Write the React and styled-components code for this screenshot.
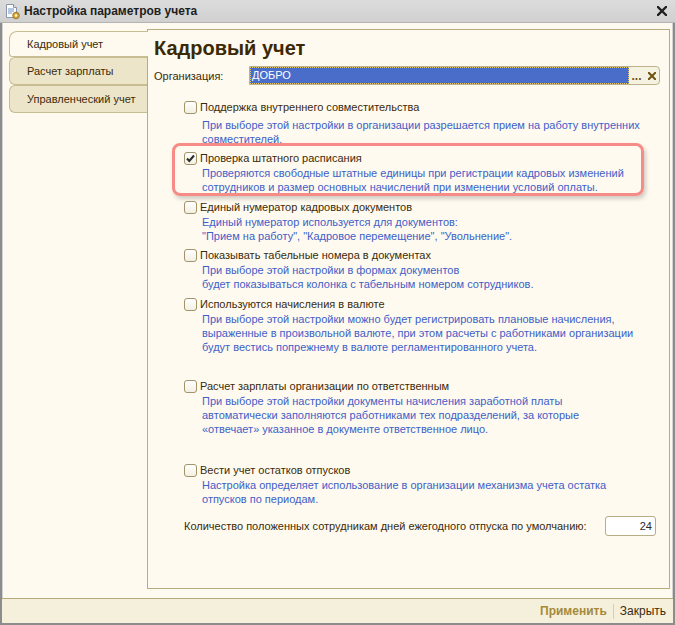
import React from "react";
import styled, { createGlobalStyle } from "styled-components";

const GlobalStyle = createGlobalStyle`
  html, body {
    margin: 0;
    padding: 0;
    background: #ffffff;
  }
  body {
    font-family: "Liberation Sans", Arial, sans-serif;
  }
`;

const settings = [
  {
    label: "Поддержка внутреннего совместительства",
    desc: [
      "При выборе этой настройки в организации разрешается прием на работу внутренних",
      "совместителей.",
    ],
    top: 0,
    descTop: 3,
  },
  {
    label: "Проверка штатного расписания",
    desc: [
      "Проверяются свободные штатные единицы при регистрации кадровых изменений",
      "сотрудников и размер основных начислений при изменении условий оплаты.",
    ],
    top: 4,
    checked: true,
    highlight: true,
  },
  {
    label: "Единый нумератор кадровых документов",
    desc: [
      "Единый нумератор используется для документов:",
      "\"Прием на работу\", \"Кадровое перемещение\", \"Увольнение\".",
    ],
    top: 5,
  },
  {
    label: "Показывать табельные номера в документах",
    desc: [
      "При выборе этой настройки в формах документов",
      "будет показываться колонка с табельным номером сотрудников.",
    ],
    top: 4,
  },
  {
    label: "Используются начисления в валюте",
    desc: [
      "При выборе этой настройки можно будет регистрировать плановые начисления,",
      "выраженные в произвольной валюте, при этом расчеты с работниками организации",
      "будут вестись попрежнему в валюте регламентированного учета.",
    ],
    top: 5,
  },
  {
    label: "Расчет зарплаты организации по ответственным",
    desc: [
      "При выборе этой настройки документы начисления заработной платы",
      "автоматически заполняются работниками тех подразделений, за которые",
      "«отвечает» указанное в документе ответственное лицо.",
    ],
    top: 24,
  },
  {
    label: "Вести учет остатков отпусков",
    desc: [
      "Настройка определяет использование в организации механизма учета остатка",
      "отпусков по периодам.",
    ],
    top: 26,
  },
];

const tabs = ["Кадровый учет", "Расчет зарплаты", "Управленческий учет"];

const App = () => {
  return (
    <>
      <GlobalStyle />
      <Window>
        <TitleBar>
          <DocIcon />
          <Title>Настройка параметров учета</Title>
          <Cross size={10} weight={2.3} color="#1f1f1f" />
        </TitleBar>
        <Body>
          <Tabs>
            {tabs.map((t, i) => (
              <Tab key={t} active={i === 0}>
                {t}
              </Tab>
            ))}
          </Tabs>
          <Panel>
            <Heading>Кадровый учет</Heading>
            <FieldRow>
              <FieldLabel>Организация:</FieldLabel>
              <Field>
                <FieldValue>ДОБРО</FieldValue>
                <FieldButton>...</FieldButton>
                <FieldButton>
                  <Cross size={8} weight={2} color="#6d5312" />
                </FieldButton>
              </Field>
            </FieldRow>
            <Items>
              {settings.map((s) => (
                <Item key={s.label} top={s.top} highlight={s.highlight}>
                  <CheckRow>
                    <CheckBox checked={s.checked} />
                    <Label>{s.label}</Label>
                  </CheckRow>
                  <Desc top={s.descTop || 0}>
                    {s.desc.map((line) => (
                      <div key={line}>{line}</div>
                    ))}
                  </Desc>
                </Item>
              ))}
              <CountRow>
                <Label>
                  Количество положенных сотрудникам дней ежегодного отпуска по
                  умолчанию:
                </Label>
                <NumberInput>24</NumberInput>
              </CountRow>
            </Items>
          </Panel>
        </Body>
        <Footer>
          <FooterButton primary>Применить</FooterButton>
          <Separator />
          <FooterButton>Закрыть</FooterButton>
        </Footer>
      </Window>
    </>
  );
};

const Cross = ({ size, weight, color }) => (
  <svg width={size} height={size} viewBox="0 0 10 10">
    <path
      d="M1 1L9 9M9 1L1 9"
      stroke={color}
      strokeWidth={weight * (10 / size)}
      strokeLinecap="square"
    />
  </svg>
);

const DocIcon = () => (
  <svg width="17" height="17" viewBox="0 0 17 17">
    <path d="M2.5 1.5h7l3 3v10h-10z" fill="#fff" stroke="#8a97aa" />
    <path d="M9.5 1.5v3h3" fill="#dfe6ef" stroke="#8a97aa" />
    <path d="M4 6h6M4 8h6M4 10h4" stroke="#6f8fc8" strokeWidth="1" />
    <circle cx="12" cy="12.5" r="3.3" fill="#d8a634" stroke="#8a6a1a" strokeWidth="0.8" />
    <circle cx="12" cy="12.5" r="1.2" fill="#fff6d8" />
  </svg>
);

const CheckBox = ({ checked }) => (
  <Box>
    {checked && (
      <svg width="11" height="11" viewBox="0 0 11 11">
        <path d="M2 5.5l2.3 2.4L9 2.5" fill="none" stroke="#2a2a2a" strokeWidth="2" />
      </svg>
    )}
  </Box>
);

const Window = styled.div`
  width: 675px;
  height: 625px;
  box-sizing: border-box;
  display: flex;
  flex-direction: column;
  background: #fefaef;
  border: 2px solid #8c8c8c;
  border-top: none;
  box-shadow: inset 1px 0 0 #d2d2d2, inset -1px 0 0 #d2d2d2, inset 0 -1px 0 #d2d2d2;
`;

const TitleBar = styled.div`
  height: 23px;
  margin: 0 -2px;
  display: flex;
  align-items: center;
  padding: 0 8px 0 4px;
  background: linear-gradient(#dcdcdc, #d0d0d0);
  border-bottom: 1px solid #b4b4b4;
  box-sizing: border-box;
  flex-shrink: 0;
`;

const Title = styled.div`
  margin-left: 3px;
  font-size: 12px;
  font-weight: bold;
  color: #1e1e1e;
  flex: 1;
`;

const Body = styled.div`
  flex: 1;
  display: flex;
  padding: 6px 3px 9px 7px;
  min-height: 0;
`;

const Tabs = styled.div`
  width: 138px;
  padding-top: 2px;
  display: flex;
  flex-direction: column;
  flex-shrink: 0;
`;

const Tab = styled.div`
  height: ${(p) => (p.active ? 26 : 28)}px;
  box-sizing: border-box;
  display: flex;
  align-items: center;
  padding-left: 17px;
  font-size: 11px;
  color: #3b2b0b;
  border: 1px solid #c8bc92;
  border-right: none;
  border-radius: ${(p) => (p.active ? "8px 0 0 3px" : "6px 0 0 6px")};
  background: ${(p) => (p.active ? "#fefaef" : "#ede5c9")};
  margin-right: ${(p) => (p.active ? "-1px" : "0")};
  position: relative;
  z-index: ${(p) => (p.active ? 1 : 0)};
`;

const Panel = styled.div`
  flex: 1;
  border: 1px solid #b8ad80;
  padding: 6px 0 0 6px;
  min-width: 0;
`;

const Heading = styled.h1`
  margin: 0;
  font-size: 20px;
  line-height: 24px;
  font-weight: bold;
  color: #3b2905;
`;

const FieldRow = styled.div`
  margin-top: 6px;
  height: 19px;
  display: flex;
  align-items: center;
  padding-right: 9px;
`;

const FieldLabel = styled.div`
  width: 95px;
  font-size: 11px;
  color: #3b2b0b;
`;

const Field = styled.div`
  flex: 1;
  height: 19px;
  display: flex;
  align-items: center;
  box-sizing: border-box;
  border: 1px solid #bdb28a;
  border-radius: 0 4px 4px 0;
  background: #f6f2e2;
`;

const FieldValue = styled.div`
  flex: 1;
  align-self: stretch;
  background: #4a6dc9;
  color: #ffffff;
  font-size: 11px;
  line-height: 17px;
  padding-left: 2px;
  outline: 1px dotted #e4c66a;
  outline-offset: -1px;
`;

const FieldButton = styled.div`
  width: 15px;
  display: flex;
  justify-content: center;
  align-items: center;
  font-size: 12px;
  font-weight: bold;
  color: #6d5312;
  line-height: 16px;
`;

const Items = styled.div`
  margin-top: 14px;
  padding-left: 30px;
  display: flex;
  flex-direction: column;
`;

const Item = styled.div`
  margin-top: ${(p) => p.top}px;
  position: relative;

  &::before {
    content: "";
    display: ${(p) => (p.highlight ? "block" : "none")};
    position: absolute;
    top: -7px;
    bottom: -2px;
    left: -12px;
    right: 25px;
    border: 3px solid rgba(246, 128, 122, 0.9);
    border-radius: 8px;
    box-shadow: 2px 3px 4px rgba(0, 0, 0, 0.18);
    pointer-events: none;
  }
`;

const CheckRow = styled.div`
  display: flex;
  align-items: center;
  height: 16px;
  gap: 3px;
`;

const Box = styled.span`
  width: 13px;
  height: 13px;
  box-sizing: border-box;
  border: 1px solid #a0946a;
  border-radius: 3px;
  background: linear-gradient(#ffffff, #f3efe2);
  display: flex;
  align-items: center;
  justify-content: center;
  flex-shrink: 0;
`;

const Label = styled.div`
  font-size: 11px;
  line-height: 16px;
  color: #3b2b0b;
  white-space: nowrap;
`;

const Desc = styled.div`
  margin-top: ${(p) => p.top}px;
  padding-left: 18px;
  font-size: 11px;
  line-height: 14px;
  color: #4060c8;
  white-space: nowrap;
`;

const CountRow = styled.div`
  margin-top: 10px;
  height: 20px;
  display: flex;
  align-items: center;
  justify-content: space-between;
  padding-right: 13px;
`;

const NumberInput = styled.div`
  width: 51px;
  height: 20px;
  box-sizing: border-box;
  border: 1px solid #b8ad86;
  border-radius: 3px;
  background: #ffffff;
  font-size: 11px;
  line-height: 18px;
  text-align: right;
  padding-right: 3px;
  color: #2a2a2a;
`;

const Footer = styled.div`
  height: 25px;
  flex-shrink: 0;
  box-sizing: border-box;
  border-top: 1px solid #b7ab7c;
  background: #f5f0dc;
  display: flex;
  align-items: center;
  justify-content: flex-end;
  padding-right: 7px;
`;

const FooterButton = styled.div`
  font-size: 12px;
  font-weight: ${(p) => (p.primary ? "bold" : "normal")};
  color: ${(p) => (p.primary ? "#a58a3a" : "#3b2b0b")};
`;

const Separator = styled.div`
  width: 1px;
  height: 15px;
  background: #d7cfb2;
  margin: 0 6px;
`;

export default App;
